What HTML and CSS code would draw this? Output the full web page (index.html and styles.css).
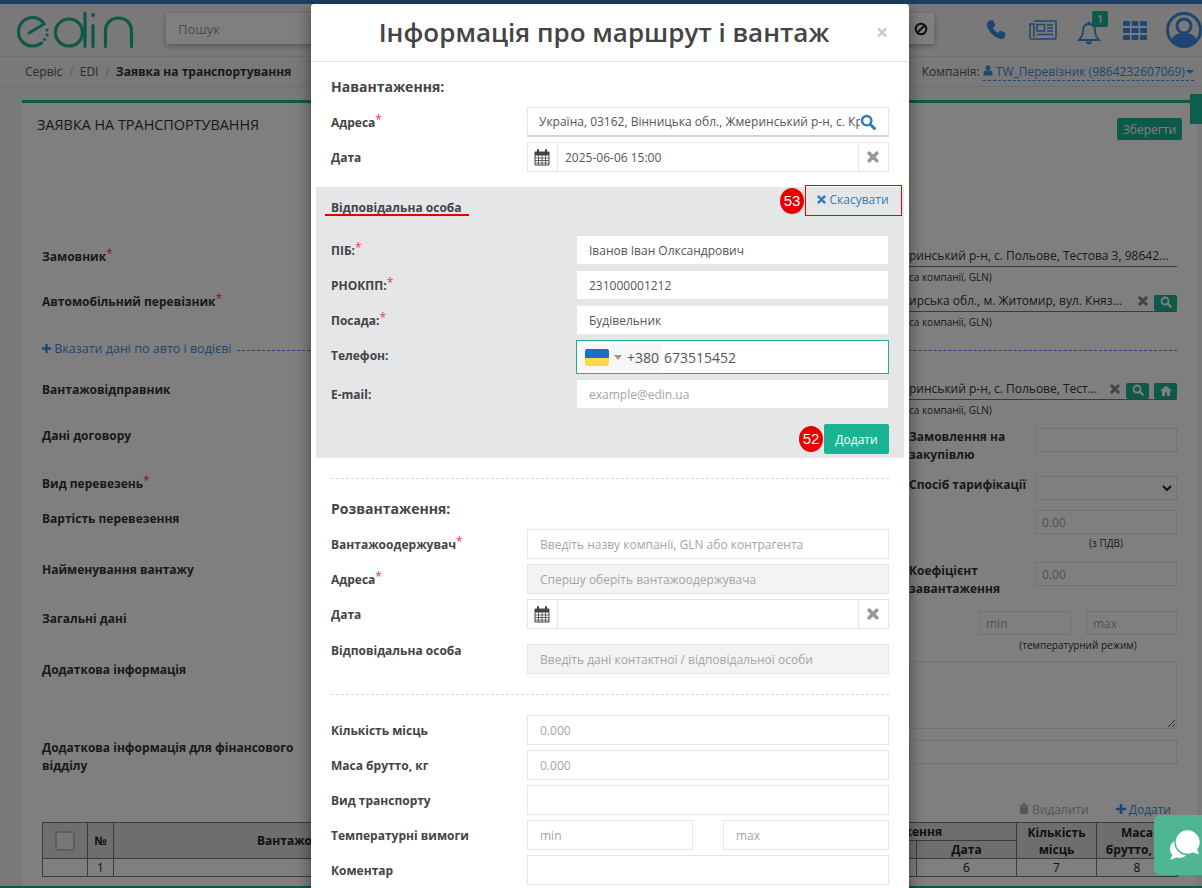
FILE: index.html

```html
<!DOCTYPE html>
<html lang="uk">
<head>
    <meta charset="UTF-8">
    <title>Заявка на транспортування</title>
    <link rel="stylesheet" href="styles.css">
</head>
<body>
    <svg class="defs">
        <symbol id="i-search" viewBox="0 0 16 16"><circle cx="6.700" cy="6.700" r="4.700" fill="none" stroke="currentColor" stroke-width="2.400"/><path d="M10.200 10.200l4.200 4.200" stroke="currentColor" stroke-width="3" stroke-linecap="round"/></symbol>
        <symbol id="i-times" viewBox="0 0 12 12"><path d="M2.200 2.200l7.600 7.600M9.800 2.200l-7.600 7.600" stroke="currentColor" stroke-width="3.600" stroke-linecap="round"/></symbol>
        <symbol id="i-cal" viewBox="0 0 16 17"><path d="M1 3h14v13H1z" fill="none" stroke="currentColor" stroke-width="1"/><path d="M1 3h14v3.500H1z" fill="currentColor"/><path d="M4 1v3M12 1v3" stroke="currentColor" stroke-width="2" stroke-linecap="round"/><path d="M1 9h14M1 11.500h14M1 14h14M4.500 6v10M8 6v10M11.500 6v10" stroke="currentColor" stroke-width=".8"/></symbol>
        <symbol id="i-user" viewBox="0 0 12 14"><circle cx="6" cy="3.500" r="3.200" fill="currentColor"/><path d="M0.500 13.500v-3.500c0-2 1.500-3 3-3h5c1.500 0 3 1 3 3v3.500z" fill="currentColor"/></symbol>
    </svg>

    <div class="top-line"></div>
    <header class="topbar">
        <svg class="logo" width="118" height="38" viewBox="0 0 118 38">
            <g fill="none" stroke="#1cb08f" stroke-width="3.200" stroke-linecap="round">
                <path d="M13 22l15-9C26 9 21 6 15.500 6.500 8 7.500 2.500 13 2.500 21c0 8 6.500 14 14 14 3.500 0 6.500-1 9-3"/>
                <circle cx="53" cy="21.500" r="13.500"/>
                <path d="M69 2v33.500M77 14.500v21M89.500 35.500V20c0-8 5.500-13 13-13s13 5 13 13v15.500"/>
            </g>
            <g fill="#1cb08f"><circle cx="31" cy="19" r="1.600"/><circle cx="31" cy="24" r="1.600"/><circle cx="28.500" cy="28.500" r="1.600"/><circle cx="77" cy="4" r="2"/></g>
        </svg>
        <div class="search">
            <span class="search-text">Пошук</span>
            <svg class="search-ban" width="14" height="14" viewBox="0 0 14 14"><circle cx="7" cy="7" r="5.300" fill="none" stroke="#222" stroke-width="2"/><path d="M3.500 10.500l7-7" stroke="#222" stroke-width="2"/></svg>
        </div>
        <nav class="top-icons">
            <svg width="22" height="22" viewBox="0 0 22 22"><path d="M4.500 1.500L8 1l2.500 5.500-2.500 2c1 2.500 2.500 4 5 5.500l2-2.500 5.500 2.500-.5 3.500c-.5 2-2.500 3-4.500 2.500C8.500 18 3.500 12.500 2 7c-.500-2.500.5-4.500 2.500-5.500z" fill="#3a8ee0"/></svg>
            <svg width="28" height="20" viewBox="0 0 28 20"><g fill="none" stroke="#3a8ee0" stroke-width="1.500"><path d="M5 1h22v17a1 1 0 0 1-1 1H2a1 1 0 0 1-1-1V4h4v13"/><path d="M8 4.500h7.500v6.500H8z"/><path d="M18 5h6M18 8h6M18 11h6M8 14.500h16"/></g></svg>
            <div class="bell">
                <svg width="24" height="24" viewBox="0 0 24 24"><path d="M12 3c-4 0-6 3-6 6.500 0 5-2 7.500-4 9.500h20c-2-2-4-4.500-4-9.500C18 6 16 3 12 3z" fill="none" stroke="#3a8ee0" stroke-width="1.800"/><path d="M9 20.500c0 1.800 1.400 3 3 3s3-1.200 3-3z" fill="#3a8ee0"/><circle cx="12" cy="2" r="1.600" fill="#3a8ee0"/></svg>
                <span class="badge">1</span>
            </div>
            <svg width="24" height="19" viewBox="0 0 24 19"><g fill="#3a8ee0"><rect width="7" height="5" rx="1"/><rect x="8.500" width="7" height="5" rx="1"/><rect x="17" width="7" height="5" rx="1"/><rect y="7" width="7" height="5" rx="1"/><rect x="8.500" y="7" width="7" height="5" rx="1"/><rect x="17" y="7" width="7" height="5" rx="1"/><rect y="14" width="7" height="5" rx="1"/><rect x="8.500" y="14" width="7" height="5" rx="1"/><rect x="17" y="14" width="7" height="5" rx="1"/></g></svg>
            <svg class="avatar" width="36" height="36" viewBox="0 0 36 36"><circle cx="18" cy="18" r="16.500" fill="none" stroke="#3a8ee0" stroke-width="3"/><circle cx="18" cy="14" r="7" fill="none" stroke="#3a8ee0" stroke-width="3"/><path d="M5 29c2-6 7-8 13-8s11 2 13 8c-3 3.500-8 5.500-13 5.500S8 32.500 5 29z" fill="#3a8ee0"/></svg>
        </nav>
    </header>

    <div class="crumbs">
        <span>Сервіс</span><i>/</i><span>EDI</span><i>/</i><b>Заявка на транспортування</b>
        <div class="company">Компанія: <span class="company-name"><svg width="10" height="11"><use href="#i-user"/></svg> TW_Перевізник (9864232607069) <em></em></span></div>
    </div>

    <main class="panel">
        <div class="panel-head">
            <h2>ЗАЯВКА НА ТРАНСПОРТУВАННЯ</h2>
            <button class="btn-save">Зберегти</button>
        </div>
        <section class="order-form">
            <label class="lbl">Замовник<sup>*</sup></label>
            <div class="rc">
                <div class="picked"><span>ринський р-н, с. Польове, Тестова 3, 98642...</span></div>
                <div class="hint">са компанії, GLN)</div>
            </div>

            <label class="lbl">Автомобільний перевізник<sup>*</sup></label>
            <div class="rc">
                <div class="picked"><span>ирська обл., м. Житомир, вул. Княз...</span>
                    <svg class="x" width="10" height="10"><use href="#i-times"/></svg>
                    <button class="mini"><svg width="12" height="12"><use href="#i-search"/></svg></button>
                </div>
                <div class="hint">са компанії, GLN)</div>
            </div>

            <div class="auto-link"><svg width="9" height="9" viewBox="0 0 9 9"><path d="M4.500 0v9M0 4.500h9" stroke="currentColor" stroke-width="2.400"/></svg> Вказати дані по авто і водієві</div>

            <label class="lbl">Вантажовідправник</label>
            <div class="rc">
                <div class="picked"><span>ринський р-н, с. Польове, Тест...</span>
                    <svg class="x" width="10" height="10"><use href="#i-times"/></svg>
                    <button class="mini"><svg width="12" height="12"><use href="#i-search"/></svg></button>
                    <button class="mini"><svg width="12" height="11" viewBox="0 0 12 11"><path d="M6 .5L0 6h2v5h3V7.500h2V11h3V6h2z" fill="#fff"/></svg></button>
                </div>
                <div class="hint">са компанії, GLN)</div>
            </div>

            <label class="lbl">Дані договору</label>
            <div class="rc split">
                <label class="lbl-r">Замовлення на закупівлю</label>
                <input class="bg-input" type="text">
            </div>

            <label class="lbl">Вид перевезень<sup>*</sup></label>
            <div class="rc split">
                <label class="lbl-r">Спосіб тарифікації</label>
                <div class="bg-input bg-select"><svg width="10" height="7" viewBox="0 0 10 7"><path d="M1 1l4 4 4-4" fill="none" stroke="#222" stroke-width="2"/></svg></div>
            </div>

            <label class="lbl lbl-low">Вартість перевезення</label>
            <div class="rc split">
                <span></span>
                <div>
                    <input class="bg-input" type="text" placeholder="0.00">
                    <div class="note">(з ПДВ)</div>
                </div>
            </div>

            <label class="lbl">Найменування вантажу</label>
            <div class="rc split">
                <label class="lbl-r">Коефіцієнт завантаження</label>
                <input class="bg-input" type="text" placeholder="0.00">
            </div>

            <label class="lbl lbl-low">Загальні дані</label>
            <div class="rc">
                <div class="minmax">
                    <input class="bg-input" type="text" placeholder="min">
                    <input class="bg-input" type="text" placeholder="max">
                </div>
                <div class="note note-temp">(температурний режим)</div>
            </div>

            <label class="lbl">Додаткова інформація</label>
            <div class="rc"><textarea class="bg-area"></textarea></div>

            <label class="lbl lbl-wide">Додаткова інформація для фінансового відділу</label>
            <div class="rc"><input class="bg-input" type="text"></div>
        </section>

        <div class="table-tools">
            <span class="tool-del"><svg width="10" height="11" viewBox="0 0 10 11"><path d="M0 2h10v1H0zM3.500 0h3v2h-3zM1 3.500h8V11H1z" fill="currentColor"/></svg> Видалити</span>
            <span class="tool-add"><svg width="10" height="10" viewBox="0 0 10 10"><path d="M5 0v10M0 5h10" stroke="currentColor" stroke-width="2.600"/></svg> Додати</span>
        </div>
        <table class="cargo">
            <colgroup>
                <col class="c-check"><col class="c-num"><col class="c-a"><col class="c-b"><col class="c-c"><col class="c-d"><col class="c-e"><col class="c-f">
            </colgroup>
            <tr>
                <th rowspan="2"><span class="check"></span></th>
                <th rowspan="2">№</th>
                <th rowspan="2" class="th-cut">Вантажо</th>
                <th rowspan="2"></th>
                <th colspan="2" class="th-end">кення</th>
                <th rowspan="2">Кількість місць</th>
                <th rowspan="2">Маса брутто, кг</th>
            </tr>
            <tr><th></th><th>Дата</th></tr>
            <tr><td></td><td>1</td><td></td><td></td><td></td><td>6</td><td>7</td><td>8</td></tr>
        </table>
    </main>
    <div class="footer-line"></div>

    <div class="overlay"></div>
    <div class="side-tab"></div>

    <div class="modal">
        <div class="modal-head">
            <h1>Інформація про маршрут і вантаж</h1>
            <span class="close">×</span>
        </div>
        <div class="modal-body">
            <h3>Навантаження:</h3>
            <div class="row">
                <label>Адреса<sup>*</sup></label>
                <div class="addr">
                    <input type="text" value="Україна, 03162, Вінницька обл., Жмеринський р-н, с. Кропивня, вул. Центральна 1">
                    <svg width="16" height="16"><use href="#i-search"/></svg>
                </div>
            </div>
            <div class="row">
                <label>Дата</label>
                <div class="date">
                    <span class="date-cal"><svg width="16" height="17"><use href="#i-cal"/></svg></span>
                    <input type="text" value="2025-06-06 15:00">
                    <span class="date-x"><svg width="12" height="12"><use href="#i-times"/></svg></span>
                </div>
            </div>

            <section class="person">
                <div class="person-head">
                    <h4>Відповідальна особа</h4>
                    <div class="person-cancel">
                        <span class="mark">53</span>
                        <button class="btn-cancel"><svg width="9" height="9"><use href="#i-times"/></svg> Скасувати</button>
                    </div>
                </div>
                <div class="prow"><label>ПІБ:<sup>*</sup></label><input type="text" value="Іванов Іван Олксандрович"></div>
                <div class="prow"><label>РНОКПП:<sup>*</sup></label><input type="text" value="231000001212"></div>
                <div class="prow"><label>Посада:<sup>*</sup></label><input type="text" value="Будівельник"></div>
                <div class="prow prow-tel">
                    <label>Телефон:</label>
                    <div class="tel">
                        <div class="tel-code"><span class="flag"></span><em></em><span>+380</span></div>
                        <span class="tel-num">673515452</span>
                    </div>
                </div>
                <div class="prow"><label>E-mail:</label><input type="text" placeholder="example@edin.ua"></div>
                <div class="person-foot">
                    <span class="mark">52</span>
                    <button class="btn-add">Додати</button>
                </div>
            </section>

            <hr>

            <h3>Розвантаження:</h3>
            <div class="row">
                <label>Вантажоодержувач<sup>*</sup></label>
                <input type="text" placeholder="Введіть назву компанії, GLN або контрагента">
            </div>
            <div class="row">
                <label>Адреса<sup>*</sup></label>
                <input class="off" type="text" placeholder="Спершу оберіть вантажоодержувача">
            </div>
            <div class="row">
                <label>Дата</label>
                <div class="date">
                    <span class="date-cal"><svg width="16" height="17"><use href="#i-cal"/></svg></span>
                    <input type="text">
                    <span class="date-x"><svg width="12" height="12"><use href="#i-times"/></svg></span>
                </div>
            </div>
            <div class="row row-top">
                <label>Відповідальна особа</label>
                <input class="off" type="text" placeholder="Введіть дані контактної / відповідальної особи">
            </div>

            <hr>

            <div class="row"><label>Кількість місць</label><input type="text" placeholder="0.000"></div>
            <div class="row"><label>Маса брутто, кг</label><input type="text" placeholder="0.000"></div>
            <div class="row"><label>Вид транспорту</label><input type="text"></div>
            <div class="row">
                <label>Температурні вимоги</label>
                <div class="temp"><input type="text" placeholder="min"><input type="text" placeholder="max"></div>
            </div>
            <div class="row"><label>Коментар</label><input type="text"></div>
        </div>
    </div>

    <div class="chat">
        <svg width="34" height="32" viewBox="0 0 34 32">
            <path d="M11 11c-5 0-9 4-9 9 0 2.500 1 4.500 2.500 6L2 31l6.500-2.500c1 .3 2 .5 3 .5 5 0 9-4 9-9s-4-9-9.500-9z" fill="#fff"/>
            <path d="M19.500 .5C12.500 .5 7 6 7 13s5.500 12.500 12.500 12.500c2 0 4-.500 5.500-1.200l7 2.200-2-6c1.500-2 2.500-4.500 2.500-7.500C32 6 26.500 .5 19.500 .5z" fill="#fff" stroke="#4fb592" stroke-width="1.500"/>
        </svg>
    </div>
</body>
</html>
```

FILE: styles.css

```css
* {
    box-sizing: border-box;
}
html, body {
    height: 100%;
}
body {
    margin: 0;
    height: 888px;
    overflow: hidden;
    position: relative;
    font-family: "Open Sans", sans-serif;
    font-size: 12px;
    color: #444;
    background-color: #f3f3f4;
}
.defs {
    display: none;
}
sup {
    color: #e8365d;
    font-size: 12px;
    line-height: 0;
    font-weight: 400;
    vertical-align: 3px;
}
input, textarea, button {
    font-family: inherit;
}
input::placeholder {
    color: #a5a5a5;
    opacity: 1;
}

/* page behind the dialog */
.top-line {
    height: 4px;
    background-color: #3680c9;
}
.topbar {
    height: 53px;
    display: flex;
    align-items: center;
    padding-left: 16px;
    border-bottom: 1px solid #e2e2e2;
}
.logo {
    flex: none;
}
.search {
    width: 775px;
    height: 31px;
    margin: -3px 0 0 32px;
    display: flex;
    align-items: center;
    justify-content: space-between;
    padding: 0 11px 0 12px;
    background-color: #fff;
    box-shadow: 0 2px 6px rgba(0,0,0,0.3);
    font-size: 13px;
    color: #999;
}
.search-ban {
    margin-right: -5px;
}
.top-icons {
    display: flex;
    align-items: center;
    margin-left: 51px;
    gap: 22px;
}
.bell {
    position: relative;
    width: 24px;
    height: 24px;
    margin: 6px 0 0 -2px;
}
.badge {
    position: absolute;
    top: -10px;
    left: 15px;
    width: 16px;
    height: 16px;
    border-radius: 2px;
    background-color: #1ab394;
    color: #fff;
    font-size: 10px;
    font-weight: 600;
    text-align: center;
    line-height: 16px;
}
.avatar {
    flex: none;
    margin-left: -3px;
}
.crumbs {
    height: 30px;
    display: flex;
    align-items: center;
    padding: 0 8px 0 25px;
    border-bottom: 1px solid #e2e2e2;
    color: #555;
}
.crumbs i {
    font-style: normal;
    color: #bbb;
    margin: 0 6px 0 7px;
}
.crumbs b {
    color: #333;
}
.company {
    margin-left: auto;
}
.company-name {
    color: #3a8ee0;
    border-bottom: 1px dashed #3a8ee0;
}
.company-name em {
    display: inline-block;
    margin-left: -2px;
    border: 4px solid transparent;
    border-top-color: #3a8ee0;
    border-bottom: 0;
    vertical-align: 2px;
}
.panel {
    margin: 13px 5px 0 22px;
    height: 787px;
    padding: 0 20px;
    background-color: #fff;
    border-top: 3px solid #1ab394;
}
.panel-head {
    height: 143px;
    display: flex;
    justify-content: space-between;
    align-items: flex-start;
    padding: 13px 0 0 0;
    margin: 0 -5px;
}
.panel-head h2 {
    margin: 0;
    font-size: 14.400px;
    line-height: 18px;
    font-weight: 400;
    color: #333;
}
.btn-save {
    width: 65px;
    height: 22px;
    margin-top: 2px;
    padding: 0;
    border: 0;
    border-radius: 2px;
    background-color: #1ab394;
    color: #fff;
    font-size: 12px;
}
.order-form {
    display: grid;
    grid-template-columns: 269px 598px 268px;
    grid-template-rows: 45px 46px 42px 46px 48px 34px 52px 48px 52px 78px 64px;
    width: 1135px;
}
.lbl {
    grid-column: 1;
    padding-top: 2px;
    font-weight: 700;
    line-height: 18px;
    color: #333;
}
.lbl-low {
    padding-top: 3px;
}
.lbl-wide {
    width: 262px;
}
.rc {
    grid-column: 3;
}
.picked {
    height: 21px;
    display: flex;
    align-items: flex-end;
    justify-content: flex-end;
    gap: 5px;
    border-bottom: 1px solid #777;
    line-height: 20px;
    color: #333;
    white-space: nowrap;
}
.picked span {
    flex: 1;
}
.picked .x {
    color: #888;
    align-self: center;
    margin-right: 1px;
}
.mini {
    width: 23px;
    height: 16px;
    padding: 0;
    border: 0;
    border-radius: 2px;
    background-color: #1ab394;
    color: #fff;
    line-height: 14px;
}
.hint {
    font-size: 10px;
    line-height: 14px;
    margin-top: 3px;
    color: #333;
}
.auto-link {
    grid-column: 1 / 4;
    height: 24px;
    padding-top: 3px;
    color: #3a8ee0;
    font-size: 12.500px;
    line-height: 18px;
    position: relative;
}
.auto-link::after {
    content: "";
    position: absolute;
    left: 195px;
    right: 0;
    top: 13px;
    border-top: 1px dashed #3a8ee0;
}
.split {
    display: grid;
    grid-template-columns: 126px 142px;
    align-items: start;
    padding-top: 3px;
}
.lbl-r {
    font-weight: 700;
    line-height: 18px;
    color: #333;
}
.bg-input {
    display: block;
    width: 100%;
    height: 24px;
    padding: 0 6px;
    border: 1px solid #e5e6e7;
    background-color: #fff;
    font-size: 12px;
}
.bg-select {
    display: flex;
    align-items: center;
    justify-content: flex-end;
    padding-right: 4px;
}
.note {
    font-size: 10px;
    line-height: 14px;
    margin-top: 2px;
    text-align: center;
    color: #333;
}
.note-temp {
    margin-top: 3px;
    padding-left: 70px;
}
.minmax {
    display: flex;
    justify-content: flex-end;
    gap: 15px;
    padding-top: 4px;
}
.minmax .bg-input {
    width: 92px;
}
.minmax .bg-input:last-child {
    width: 91px;
}
.bg-area {
    display: block;
    width: 100%;
    height: 68px;
    margin-top: 2px;
    border: 1px solid #e5e6e7;
}
.rc > .bg-input {
    margin-top: 3px;
}
.rc.split > .bg-input {
    margin-top: 0;
}
.table-tools {
    width: 1135px;
    height: 21px;
    display: flex;
    justify-content: flex-end;
    gap: 27px;
    padding-right: 6px;
    line-height: 17px;
    font-size: 12px;
}
.tool-del {
    color: #aaa;
}
.tool-add {
    color: #3a8ee0;
}
.cargo {
    width: 1135px;
    table-layout: fixed;
    border-collapse: collapse;
    color: #222;
}
.cargo th, .cargo td {
    border: 1px solid #777;
    height: 18px;
    padding: 0 2px;
    text-align: center;
    line-height: 17px;
    font-size: 12px;
}
.cargo th {
    background-color: #dcdcdc;
}
.cargo .th-cut {
    padding-left: 143px;
    text-align: left;
    white-space: nowrap;
    border-right: 0;
}
.cargo .th-end {
    padding-right: 74px;
    text-align: right;
}
.c-check { width: 45px; }
.c-num { width: 26px; }
.c-a { width: 198px; }
.c-b { width: 467px; }
.c-c { width: 138px; }
.c-d { width: 100px; }
.c-e { width: 80px; }
.c-f { width: 81px; }
.check {
    display: inline-block;
    width: 20px;
    height: 20px;
    vertical-align: middle;
    border: 2px solid #bbb;
    border-radius: 3px;
    background-color: #eee;
}
.footer-line {
    position: absolute;
    left: 0;
    right: 0;
    bottom: 0;
    height: 2px;
    background-color: #1ab394;
}
.overlay {
    position: absolute;
    inset: 0;
    background-color: rgba(0,0,0,0.5);
}
.side-tab {
    position: absolute;
    top: 94px;
    right: 0;
    width: 12px;
    height: 30px;
    background-color: #0e5d4d;
}

/* dialog */
.modal {
    position: absolute;
    top: 4px;
    left: 311px;
    width: 598px;
    height: 900px;
    background-color: #fff;
    border-radius: 3px 3px 0 0;
    box-shadow: 0 5px 15px rgba(0,0,0,0.5);
}
.modal-head {
    height: 58px;
    position: relative;
    padding-right: 12px;
    border-bottom: 1px solid #e5e5e5;
    text-align: center;
}
.modal-head h1 {
    margin: 0;
    font-size: 26px;
    font-weight: 600;
    line-height: 57px;
    color: #444;
}
.close {
    position: absolute;
    top: 14px;
    right: 21px;
    font-size: 21px;
    font-weight: 700;
    line-height: 28px;
    color: #c9c9c9;
}
.modal-body {
    padding: 15px 20px 0;
}
.modal-body h3 {
    margin: 0 0 10px;
    font-size: 14px;
    line-height: 20px;
    font-weight: 700;
    color: #444;
}
.row {
    display: grid;
    grid-template-columns: 196px 362px;
    align-items: center;
    height: 30px;
    margin-bottom: 5px;
}
.row label, .prow label {
    font-weight: 700;
    color: #444;
}
.row input, .prow input {
    width: 100%;
    height: 30px;
    padding: 0 12px;
    border: 1px solid #e5e6e7;
    background-color: #fff;
    font-size: 12px;
    color: #555;
    outline: none;
}
.row input.off {
    background-color: #f3f3f3;
}
.row-top {
    align-items: start;
    margin-top: 15px;
}
.row-top label {
    margin-top: -2px;
}
.addr {
    display: flex;
    align-items: center;
    height: 30px;
    border: 1px solid #e5e6e7;
    border-bottom: 2px solid #d4d4d4;
    color: #337ab7;
}
.row .addr input {
    flex: 1;
    min-width: 0;
    height: 26px;
    border: 0;
    padding: 0 0 0 11px;
}
.addr svg {
    flex: none;
    margin: 0 12px 0 0;
}
.date {
    display: flex;
    height: 30px;
    border: 1px solid #e5e6e7;
}
.date-cal, .date-x {
    flex: none;
    width: 30px;
    display: flex;
    align-items: center;
    justify-content: center;
}
.date-cal {
    padding-right: 2px;
    color: #444;
    border-right: 1px solid #e5e6e7;
}
.date-x {
    padding-right: 2px;
    color: #999;
    border-left: 1px solid #e5e6e7;
}
.row .date input {
    flex: 1;
    min-width: 0;
    height: 28px;
    border: 0;
    padding: 0 7px;
}
.temp {
    display: flex;
    justify-content: space-between;
}
.row .temp input {
    width: 166px;
}
.person {
    margin: 15px -15px 0;
    height: 271px;
    padding: 0 15px;
    background-color: #e5e6e8;
}
.person-head {
    height: 49px;
    display: flex;
    justify-content: space-between;
    align-items: flex-start;
}
.person-head h4 {
    position: relative;
    margin: 0;
    padding-top: 13px;
    font-size: 12px;
    line-height: 16px;
    font-weight: 700;
    color: #444;
}
.person-head h4::after {
    content: "";
    position: absolute;
    left: -6px;
    right: -7px;
    top: 27px;
    height: 2px;
    background-color: #e60000;
}
.person-cancel {
    display: flex;
    align-items: center;
    margin: -2px -13px 0 0;
}
.mark {
    flex: none;
    width: 24px;
    height: 26px;
    border-radius: 50%;
    background-color: #e60000;
    color: #fff;
    font-family: "Liberation Sans", sans-serif;
    font-size: 15px;
    line-height: 26px;
    text-align: center;
}
.btn-cancel {
    width: 97px;
    height: 31px;
    margin-left: 1px;
    padding: 0 1px 2px 0;
    border: 1px solid #e60000;
    background: none;
    color: #337ab7;
    font-size: 12px;
}
.prow {
    display: grid;
    grid-template-columns: 246px 311px;
    align-items: center;
    height: 28px;
    margin-bottom: 7px;
}
.prow input {
    height: 28px;
    border: 0;
}
.prow-tel {
    height: 34px;
    margin: -1px 0 6px;
    grid-template-columns: 245px 313px;
}
.prow-tel label {
    margin-top: -3px;
}
.tel {
    display: flex;
    align-items: center;
    height: 34px;
    padding-left: 3px;
    border: 1px solid #1ab394;
    background-color: #fff;
    font-size: 14px;
    color: #555;
}
.tel-code {
    display: flex;
    align-items: center;
    height: 26px;
    padding: 0 2px 0 5px;
    background-color: #f6f6f6;
    border-radius: 2px;
}
.flag {
    width: 24px;
    height: 17px;
    border-radius: 2px;
    background: linear-gradient(#1a6dd0 50%, #ffd84a 50%);
}
.tel-code em {
    margin: 0 5px;
    border: 4.500px solid transparent;
    border-top: 5px solid #999;
    border-bottom: 0;
}
.tel-num {
    margin-left: 3px;
}
.person-foot {
    display: flex;
    justify-content: flex-end;
    align-items: center;
    margin-top: 16px;
}
.btn-add {
    width: 65px;
    height: 30px;
    margin-left: 1px;
    padding: 0;
    border: 0;
    border-radius: 2px;
    background-color: #1ab394;
    color: #fff;
    font-size: 12px;
}
.modal-body hr {
    height: 0;
    margin: 20px 0;
    border: 0;
    border-top: 1px dashed #d8d8d8;
}
.chat {
    position: absolute;
    top: 815px;
    left: 1154px;
    width: 48px;
    height: 60px;
    padding: 14px 0 0 14px;
    border-radius: 6px 0 0 6px;
    background-color: #4fb592;
}
.chat svg {
    display: block;
}
```
